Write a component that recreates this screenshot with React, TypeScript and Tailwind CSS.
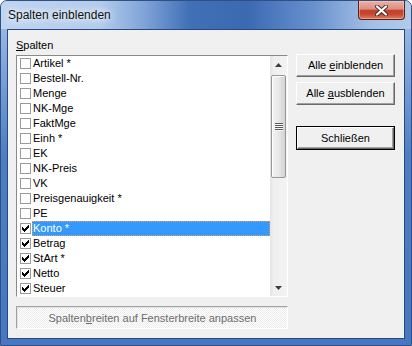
import React from 'react';

const columns: { label: string; checked: boolean }[] = [
  { label: 'Artikel *', checked: false },
  { label: 'Bestell-Nr.', checked: false },
  { label: 'Menge', checked: false },
  { label: 'NK-Mge', checked: false },
  { label: 'FaktMge', checked: false },
  { label: 'Einh *', checked: false },
  { label: 'EK', checked: false },
  { label: 'NK-Preis', checked: false },
  { label: 'VK', checked: false },
  { label: 'Preisgenauigkeit *', checked: false },
  { label: 'PE', checked: false },
  { label: 'Konto *', checked: true },
  { label: 'Betrag', checked: true },
  { label: 'StArt *', checked: true },
  { label: 'Netto', checked: true },
  { label: 'Steuer', checked: true },
];

const SELECTED = 11;

function Check() {
  // classic 7x7 pixel check mark
  const cols: [number, number][] = [
    [0, 2], [1, 3], [2, 4], [3, 3], [4, 2], [5, 1], [6, 0],
  ];
  return (
    <svg width="7" height="7" viewBox="0 0 7 7" shapeRendering="crispEdges">
      {cols.map(([x, y]) => (
        <rect key={x} x={x} y={y} width="1" height="3" fill="#000" />
      ))}
    </svg>
  );
}

function CloseButton() {
  return (
    <div className="absolute right-[6px] top-0 flex h-[19px] w-[47px] items-center justify-center rounded-b-[4px] border border-t-0 border-[#5e1d15] bg-[linear-gradient(to_bottom,#eab1a4_0%,#dc8e7f_45%,#c4412f_52%,#c6452f_72%,#dc7e60_100%)] shadow-[inset_0_0_0_1px_rgba(255,210,200,0.45)]">
      <svg width="13" height="11" viewBox="0 0 13 11">
        <path d="M2 1.5 L11 9.5 M11 1.5 L2 9.5" stroke="#4a2a26" strokeWidth="4" strokeLinecap="round" />
        <path d="M2 1.5 L11 9.5 M11 1.5 L2 9.5" stroke="#ffffff" strokeWidth="2.2" strokeLinecap="round" />
      </svg>
    </div>
  );
}

function Arrow({ up }: { up?: boolean }) {
  return (
    <svg width="7" height="4" viewBox="0 0 7 4">
      <polygon points={up ? '0,4 3.5,0 7,4' : '0,0 3.5,4 7,0'} fill="#3d3d3d" />
    </svg>
  );
}

function Scrollbar() {
  return (
    <div className="flex w-[17px] flex-col bg-[linear-gradient(to_right,#e3e3e3,#efefef_20%,#f3f3f3)]">
      <div className="flex h-[17px] items-center justify-center">
        <Arrow up />
      </div>
      <div className="mx-[1px] mt-[2px] flex h-[103px] items-center justify-center rounded-[2px] border border-[#989898] bg-[linear-gradient(to_right,#f4f4f4,#e8e8e8_50%,#d2d2d2)] shadow-[inset_1px_1px_0_#ffffff]">
        <div className="flex flex-col">
          {[0, 1, 2, 3].map((i) => (
            <div key={i} className="h-[2px] w-[8px] border-t border-[#5a5a5a] bg-[#f8f8f8]" />
          ))}
        </div>
      </div>
      <div className="flex-1" />
      <div className="flex h-[17px] items-center justify-center">
        <Arrow />
      </div>
    </div>
  );
}

function Button({ children, isDefault }: { children: React.ReactNode; isDefault?: boolean }) {
  const face =
    'flex h-full w-full items-center justify-center border border-t-white border-l-white ' +
    'border-r-[#696969] border-b-[#696969] bg-[#f0f0f0] shadow-[inset_-1px_-1px_0_#a0a0a0]';
  return (
    <div className={isDefault ? 'h-[24px] w-[99px] border border-black' : 'h-[23px] w-[99px]'}>
      <div className={face}>{children}</div>
    </div>
  );
}

export default function App() {
  return (
    <div className="h-[346px] w-[412px] bg-white font-['Liberation_Sans',Arial,sans-serif] text-[11px] text-black">
      <div className="flex h-full flex-col overflow-hidden rounded-t-[7px] border border-[#30507f] bg-[linear-gradient(to_bottom,#a8c4ea_0%,#7ea3d9_20%,#4d7dc4_45%,#4777c0_100%)]">
        {/* title bar */}
        <div className="relative flex h-[28px] shrink-0 items-center bg-[linear-gradient(to_right,#bfd4f0_0%,#b4ccec_24%,#7fa3d8_35%,#4170b7_46%,#3b69b2_60%,#6890cd_76%,#a3bfe6_90%,#b2caeb_100%)] pl-[7px]">
          <span className="text-[12px] leading-[15px] text-[#111] [text-shadow:0_0_6px_#fff,0_0_10px_#fff]">
            Spalten einblenden
          </span>
          <CloseButton />
        </div>

        {/* client */}
        <div className="px-[6px] pb-[6px]">
          <div className="flex h-[310px] border border-[#264a80] bg-[#f0f0f0] pl-[8px]">
            <div className="flex w-[272px] flex-col pt-[9px]">
              <div className="h-[13px] leading-[13px]">
                <span className="underline">S</span>palten
              </div>

              {/* list box */}
              <div className="mt-[3px] flex h-[242px] border border-t-[#8a8a8a] border-l-[#8a8a8a] border-r-white border-b-white bg-white">
                <div className="flex-1">
                  {columns.map((c, i) => {
                    const sel = i === SELECTED;
                    return (
                      <div key={c.label} className="flex h-[15px] items-center">
                        <div className="ml-[3px] flex h-[11px] w-[11px] shrink-0 items-center justify-center border border-[#9a9a9a] bg-white">
                          {c.checked && <Check />}
                        </div>
                        <div
                          className={
                            'ml-[1px] h-[15px] flex-1 border leading-[13px] ' +
                            (sel
                              ? 'border-dotted border-[#d8a060] bg-[#3399ff] text-white'
                              : 'border-transparent')
                          }
                        >
                          {c.label}
                        </div>
                      </div>
                    );
                  })}
                </div>
                <Scrollbar />
              </div>

              {/* disabled button */}
              <div className="mt-[9px] flex h-[23px] items-center justify-center border border-t-[#a0a0a0] border-l-[#a0a0a0] border-r-white border-b-white bg-[repeating-conic-gradient(#ffffff_0_25%,#ebebeb_0_50%)] bg-[length:2px_2px] pl-[1px] pt-[1px] text-[#6d6d6d] shadow-[inset_1px_1px_0_#e3e3e3]">
                <span>
                  Spalten<span className="underline">b</span>reiten auf Fensterbreite anpassen
                </span>
              </div>
            </div>

            {/* right buttons */}
            <div className="ml-[8px] flex flex-col pt-[24px]">
              <Button>
                <span>
                  Alle <span className="underline">e</span>inblenden
                </span>
              </Button>
              <div className="mt-[5px]">
                <Button>
                  <span>
                    Alle <span className="underline">a</span>usblenden
                  </span>
                </Button>
              </div>
              <div className="mt-[21px]">
                <Button isDefault>Schließen</Button>
              </div>
            </div>
          </div>
        </div>
      </div>
    </div>
  );
}
